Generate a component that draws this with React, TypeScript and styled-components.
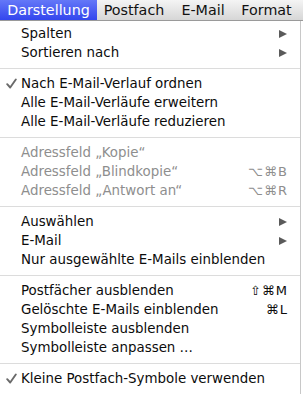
import React from 'react';
import styled, { createGlobalStyle } from 'styled-components';

const GlobalStyle = createGlobalStyle`
  html, body {
    margin: 0;
    padding: 0;
    background: #ffffff;
  }
  body {
    font-family: 'DejaVu Sans', 'Liberation Sans', sans-serif;
    -webkit-font-smoothing: antialiased;
  }
`;

type Item =
  | { kind: 'sep' }
  | {
      kind: 'item';
      label: string;
      checked?: boolean;
      disabled?: boolean;
      submenu?: boolean;
      shortcut?: string;
    };

const items: Item[] = [
  { kind: 'item', label: 'Spalten', submenu: true },
  { kind: 'item', label: 'Sortieren nach', submenu: true },
  { kind: 'sep' },
  { kind: 'item', label: 'Nach E-Mail-Verlauf ordnen', checked: true },
  { kind: 'item', label: 'Alle E-Mail-Verläufe erweitern' },
  { kind: 'item', label: 'Alle E-Mail-Verläufe reduzieren' },
  { kind: 'sep' },
  { kind: 'item', label: 'Adressfeld „Kopie“', disabled: true },
  { kind: 'item', label: 'Adressfeld „Blindkopie“', disabled: true, shortcut: '⌥⌘B' },
  { kind: 'item', label: 'Adressfeld „Antwort an“', disabled: true, shortcut: '⌥⌘R' },
  { kind: 'sep' },
  { kind: 'item', label: 'Auswählen', submenu: true },
  { kind: 'item', label: 'E-Mail', submenu: true },
  { kind: 'item', label: 'Nur ausgewählte E-Mails einblenden' },
  { kind: 'sep' },
  { kind: 'item', label: 'Postfächer ausblenden', shortcut: '⇧⌘M' },
  { kind: 'item', label: 'Gelöschte E-Mails einblenden', shortcut: '⌘L' },
  { kind: 'item', label: 'Symbolleiste ausblenden' },
  { kind: 'item', label: 'Symbolleiste anpassen …' },
  { kind: 'sep' },
  { kind: 'item', label: 'Kleine Postfach-Symbole verwenden', checked: true },
];

const Screen = styled.div`
  width: 303px;
  height: 394px;
  overflow: hidden;
  display: flex;
  flex-direction: column;
  background: #ffffff;
`;

const MenuBar = styled.div`
  height: 21px;
  display: flex;
  align-items: stretch;
  background: linear-gradient(#f4f4f4, #d6d6d6);
  border-bottom: 1px solid #9a9a9a;
  box-sizing: border-box;
`;

const BarTitle = styled.div<{ $active?: boolean; $width: number }>`
  width: ${({ $width }) => $width}px;
  display: flex;
  align-items: center;
  justify-content: center;
  font-size: 14.3px;
  color: ${({ $active }) => ($active ? '#ffffff' : '#111111')};
  background: ${({ $active }) =>
    $active ? 'linear-gradient(#6478f8, #3346ee)' : 'transparent'};
`;

const Panel = styled.div`
  width: 301px;
  flex: 1;
  box-sizing: border-box;
  padding: 3px 0 5px;
  background: rgba(255, 255, 255, 0.97);
  border-right: 1px solid #c8c8c8;
  display: flex;
  flex-direction: column;
`;

const Row = styled.div<{ $disabled?: boolean }>`
  height: 19px;
  display: flex;
  align-items: center;
  padding: 0 12px 0 0;
  font-size: 13.4px;
  color: ${({ $disabled }) => ($disabled ? '#8e8e8e' : '#0c0c0c')};
`;

const CheckCol = styled.div`
  width: 20px;
  display: flex;
  justify-content: center;
  padding-left: 1px;
`;

const Label = styled.span`
  flex: 1;
  white-space: nowrap;
`;

const Shortcut = styled.span`
  font-size: 13px;
  letter-spacing: 1px;
  white-space: nowrap;
`;

const Arrow = styled.span`
  width: 0;
  height: 0;
  border-top: 4.5px solid transparent;
  border-bottom: 4.5px solid transparent;
  border-left: 8px solid #5a5a5a;
  margin-right: 1px;
`;

const Separator = styled.div`
  height: 12px;
  display: flex;
  align-items: center;
  &::after {
    content: '';
    flex: 1;
    height: 1px;
    background: #dcdcdc;
  }
`;

const Check = () => (
  <svg width="11" height="11" viewBox="0 0 11 11">
    <path
      d="M1.2 6.2 L4.2 9.5 L9.8 1.5"
      fill="none"
      stroke="#6a6a6a"
      strokeWidth="1.9"
      strokeLinecap="round"
      strokeLinejoin="round"
    />
  </svg>
);

export default function App() {
  return (
    <>
      <GlobalStyle />
      <Screen>
        <MenuBar>
          <BarTitle $active $width={97}>Darstellung</BarTitle>
          <BarTitle $width={74}>Postfach</BarTitle>
          <BarTitle $width={64}>E-Mail</BarTitle>
          <BarTitle $width={63}>Format</BarTitle>
        </MenuBar>
        <Panel>
          {items.map((it, i) =>
            it.kind === 'sep' ? (
              <Separator key={i} />
            ) : (
              <Row key={i} $disabled={it.disabled}>
                <CheckCol>{it.checked && <Check />}</CheckCol>
                <Label>{it.label}</Label>
                {it.shortcut && <Shortcut>{it.shortcut}</Shortcut>}
                {it.submenu && <Arrow />}
              </Row>
            )
          )}
        </Panel>
      </Screen>
    </>
  );
}
